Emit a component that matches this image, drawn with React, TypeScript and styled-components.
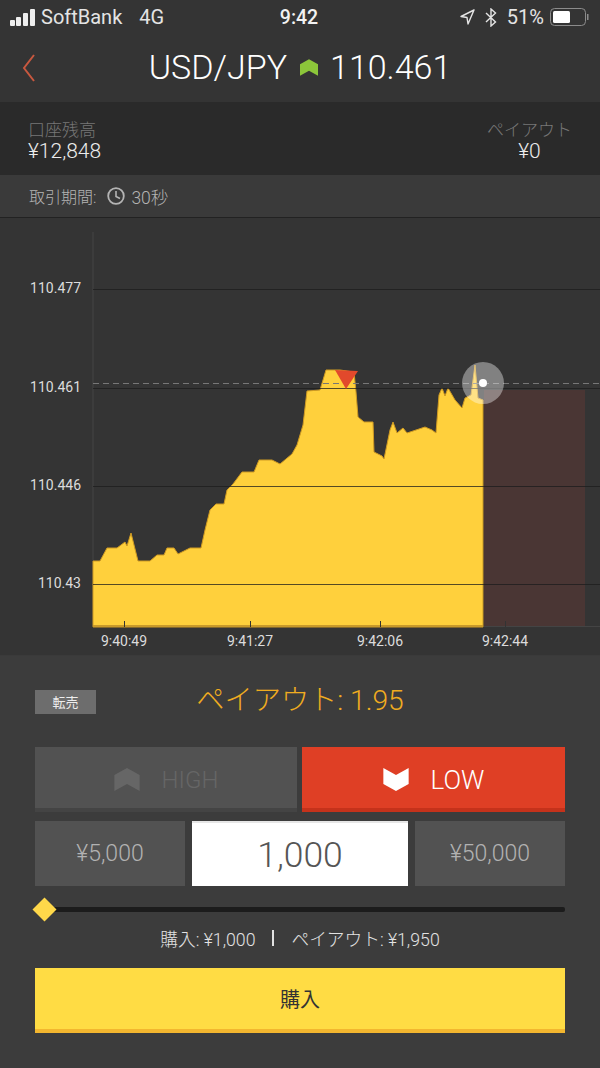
import styled, { createGlobalStyle } from "styled-components";

const GlobalStyle = createGlobalStyle`
  html, body {
    margin: 0;
    padding: 0;
    background: #3c3c3c;
  }
  * { box-sizing: border-box; }
`

const Page = styled.div`
  width: 600px;
  height: 1068px;
  display: flex;
  flex-direction: column;
  overflow: hidden;
  background: #3c3c3c;
  font-family: Roboto, "Noto Sans CJK JP", sans-serif;
  color: #fff;
`

const StatusBar = styled.div`
  height: 34px;
  padding: 0 10px 0 9px;
  display: grid;
  grid-template-columns: 1fr auto 1fr;
  align-items: center;
  background: #343434;
  font-size: 20px;
  color: #e4e4e4;
`

const StatusLeft = styled.div`
  display: flex;
  align-items: center;
`

const Carrier = styled.span`
  margin-left: 5px;
  font-weight: 400;
`

const Network = styled.span`
  margin-left: 17px;
`

const Clock = styled.span`
  font-weight: 500;
  font-size: 19.5px;
  color: #f2f2f2;
  margin-right: 1px;
`

const StatusRight = styled.div`
  display: flex;
  align-items: center;
  justify-content: flex-end;
`

const Percent = styled.span`
  margin: 0 6px 0 10px;
`

const Header = styled.div`
  height: 68px;
  position: relative;
  display: flex;
  align-items: center;
  justify-content: center;
  padding-bottom: 3px;
  background: #343434;
  font-size: 34px;
  font-weight: 300;
`

const BackButton = styled.svg`
  position: absolute;
  left: 22px;
  top: 19px;
`

const Trend = styled.svg`
  margin: 2px 12px 0 13px;
`

const Balance = styled.div`
  height: 73px;
  padding: 18px 28px 0;
  display: flex;
  justify-content: space-between;
  background: #2a2a2a;
`

const BalanceCol = styled.div<{ $right?: boolean }>`
  display: flex;
  flex-direction: column;
  align-items: ${(props) => (props.$right ? "center" : "flex-start")};
`

const BalanceLabel = styled.span`
  font-size: 17px;
  line-height: 20px;
  font-weight: 300;
  color: #777;
`

const BalanceValue = styled.span`
  font-size: 21px;
  line-height: 22px;
  font-weight: 300;
  color: #ececec;
`

const Period = styled.div`
  height: 43px;
  padding: 0 29px;
  display: flex;
  align-items: center;
  gap: 11px;
  background: #3a3a3a;
  border-bottom: 1px solid #222;
  font-size: 16px;
  font-weight: 300;
  color: #b4b4b4;
`

const PeriodValue = styled.span`
  display: flex;
  align-items: center;
  gap: 6px;
  font-size: 17.5px;
`

const ChartBox = styled.svg`
  display: block;
  flex: none;
  background: #343434;
`

const AxisLabel = styled.text`
  font-family: Roboto, sans-serif;
  font-size: 14px;
  fill: #dcdcdc;
`

const Panel = styled.div`
  flex: 1;
  padding: 0 35px;
  display: flex;
  flex-direction: column;
  background: #3c3c3c;
  border-top: 1px solid #3a3a3a;
`

const PayoutRow = styled.div`
  position: relative;
  height: 91px;
  padding-top: 26px;
  text-align: center;
  font-size: 28.2px;
  line-height: 38px;
  font-weight: 300;
  color: #f0ac20;
`

const ResellBadge = styled.span`
  position: absolute;
  left: 0;
  top: 34px;
  width: 61px;
  height: 24px;
  display: flex;
  align-items: center;
  justify-content: center;
  background: #6d6d6d;
  font-size: 13px;
  font-weight: 400;
  line-height: 1;
  color: #eee;
`

const Sides = styled.div`
  display: grid;
  grid-template-columns: 262px 263px;
  justify-content: space-between;
  height: 65px;
`

const SideButton = styled.div<{ $active?: boolean }>`
  display: flex;
  align-items: center;
  justify-content: center;
  gap: 22px;
  padding-top: 4px;
  font-size: ${(props) => (props.$active ? "26px" : "24px")};
  font-weight: 300;
  background: ${(props) => (props.$active ? "#df3f25" : "#525252")};
  border-bottom: 4px solid ${(props) => (props.$active ? "#c5321b" : "#444")};
  color: ${(props) => (props.$active ? "#fff" : "#666")};
`

const Amounts = styled.div`
  margin-top: 9px;
  height: 65px;
  display: grid;
  grid-template-columns: 150px 216px 150px;
  justify-content: space-between;
`

const Preset = styled.div`
  display: flex;
  align-items: center;
  justify-content: center;
  background: #525252;
  font-size: 23px;
  font-weight: 300;
  color: #b2b2b2;
`

const AmountInput = styled.div`
  display: flex;
  align-items: center;
  justify-content: center;
  background: #fff;
  border-top: 2px solid #e6e6e6;
  font-size: 35.5px;
  font-weight: 300;
  color: #555;
`

const Slider = styled.div`
  position: relative;
  margin-top: 21px;
  height: 5px;
  border-radius: 2px;
  background: #1c1c1c;
`

const SliderThumb = styled.span`
  position: absolute;
  left: 1px;
  top: -6px;
  width: 17px;
  height: 17px;
  transform: rotate(45deg);
  background: #ffd84a;
`

const Summary = styled.div`
  margin-top: 15px;
  height: 22px;
  display: flex;
  align-items: center;
  justify-content: center;
  gap: 17px;
  font-size: 17.7px;
  font-weight: 300;
  color: #e2e2e2;
`

const Separator = styled.span`
  width: 2px;
  height: 16px;
  background: #e2e2e2;
`

const BuyButton = styled.div`
  margin-top: 19px;
  height: 65px;
  display: flex;
  align-items: center;
  justify-content: center;
  background: #ffdc44;
  border-bottom: 4px solid #f3b62f;
  font-size: 20px;
  font-weight: 400;
  color: #333;
`

// chart coordinates are page coordinates minus the chart top (218)
const TOP = 218

const PRICE_POINTS: [number, number][] = [
  [93, 561], [100, 561], [107, 548], [117, 548], [125, 542], [127, 546], [131, 533], [138, 561],
  [150, 561], [157, 555], [164, 555], [167, 548], [174, 548], [178, 554], [190, 548], [201, 548],
  [205, 530], [210, 510], [216, 504], [224, 504], [227, 490], [233, 484], [242, 472], [254, 472],
  [259, 460], [272, 460], [280, 464], [292, 454], [297, 445], [303, 425], [307, 391], [320, 390],
  [326, 370], [340, 370], [354, 372], [356, 392], [358, 417], [364, 422], [373, 422], [374, 452],
  [382, 456], [384, 459], [390, 430], [393, 422], [397, 433], [403, 428], [407, 433], [425, 427],
  [432, 430], [436, 433], [439, 395], [442, 388], [445, 396], [448, 388], [455, 400], [462, 408],
  [465, 398], [471, 395], [475, 365], [478, 398], [483, 400],
]

const GRID_LINES = [
  { y: 289, label: "110.477", x: 81 },
  { y: 388, label: "110.461", x: 81 },
  { y: 486, label: "110.446", x: 81 },
  { y: 584, label: "110.43", x: 81 },
]

const TIME_TICKS = [
  { x: 124, label: "9:40:49" },
  { x: 250, label: "9:41:27" },
  { x: 380, label: "9:42:06" },
  { x: 505, label: "9:42:44" },
]

const Chevron = ({ down, color, w, h }: { down?: boolean; color: string; w: number; h: number }) => (
  <svg width={w} height={h} viewBox="0 0 22 20">
    <polygon
      points={down ? "0,0 11,6 22,0 22,14 11,20 0,14" : "0,6 11,0 22,6 22,20 11,14 0,20"}
      fill={color}
    />
  </svg>
)

const PriceChart = () => {
  const area = PRICE_POINTS.map(([x, y]) => `${x},${y - TOP}`).join(" ")
  return (
    <ChartBox width={600} height={437} viewBox="0 0 600 437">
      <rect x={484} y={390 - TOP} width={101} height={236} fill="#4a3634" />
      <line x1={93} x2={93} y1={232 - TOP} y2={626 - TOP} stroke="#444" />
      <polygon points={`93,${627 - TOP} ${area} 483,${627 - TOP}`} fill="#ffd03c" stroke="#cf9a22" strokeWidth={1} />
      <rect x={93} y={625 - TOP} width={390} height={2} fill="#c99a2a" />
      <line x1={484} x2={600} y1={626.5 - TOP} y2={626.5 - TOP} stroke="#444" />
      {GRID_LINES.map((g) => (
        <g key={g.y}>
          <line x1={93} x2={600} y1={g.y + 0.5 - TOP} y2={g.y + 0.5 - TOP} stroke="#1c1c1c" strokeOpacity={0.75} />
          <AxisLabel x={g.x} y={g.y + 4 - TOP} textAnchor="end">{g.label}</AxisLabel>
        </g>
      ))}
      <line x1={93} x2={600} y1={383.5 - TOP} y2={383.5 - TOP} stroke="#777" strokeDasharray="6 4" />
      {TIME_TICKS.map((t) => (
        <g key={t.x}>
          <line x1={t.x + 0.5} x2={t.x + 0.5} y1={621 - TOP} y2={627 - TOP} stroke="#333" />
          <AxisLabel x={t.x} y={646 - TOP} textAnchor="middle">{t.label}</AxisLabel>
        </g>
      ))}
      <polygon points={`335,${370 - TOP} 358,${371 - TOP} 346,${389 - TOP}`} fill="#e2492c" />
      <circle cx={483} cy={383 - TOP} r={21} fill="#fff" fillOpacity={0.38} />
      <circle cx={483} cy={383 - TOP} r={4} fill="#fff" />
    </ChartBox>
  )
}

const App = () => {
  return (
    <Page>
      <GlobalStyle />
      <StatusBar>
        <StatusLeft>
          <svg width={27} height={17} viewBox="0 0 27 17">
            <rect x={1} y={11} width={5} height={6} rx={1} fill="#eee" />
            <rect x={7} y={8} width={5} height={9} rx={1} fill="#eee" />
            <rect x={14} y={4} width={5} height={13} rx={1} fill="#eee" />
            <rect x={21} y={0} width={5} height={17} rx={1} fill="#eee" />
          </svg>
          <Carrier>SoftBank</Carrier>
          <Network>4G</Network>
        </StatusLeft>
        <Clock>9:42</Clock>
        <StatusRight>
          <svg width={15} height={16} viewBox="0 0 15 16">
            <path d="M14 1 L1 7.5 L7 8.5 L8 15 Z" fill="none" stroke="#e4e4e4" strokeWidth={1.4} strokeLinejoin="round" />
          </svg>
          <svg width={12} height={19} viewBox="0 0 12 19" style={{ marginLeft: 10 }}>
            <path d="M1 5 L10.5 14 L6 18 V1 L10.5 5 L1 14" fill="none" stroke="#e4e4e4" strokeWidth={1.4} />
          </svg>
          <Percent>51%</Percent>
          <svg width={40} height={18} viewBox="0 0 40 18">
            <rect x={0.5} y={0.5} width={35} height={17} rx={4} fill="none" stroke="#8c8c8c" />
            <rect x={3} y={3} width={17} height={12} rx={1.5} fill="#fff" />
            <rect x={37} y={6} width={1.5} height={6} fill="#8c8c8c" />
          </svg>
        </StatusRight>
      </StatusBar>
      <Header>
        <BackButton width={15} height={30} viewBox="0 0 15 30">
          <path d="M12 2 L2 15 L12 28" fill="none" stroke="#c8583f" strokeWidth={2} />
        </BackButton>
        USD/JPY
        <Trend width={18} height={17} viewBox="0 0 22 20">
          <polygon points="0,6 11,0 22,6 22,20 11,14 0,20" fill="#8cc63a" />
        </Trend>
        110.461
      </Header>
      <Balance>
        <BalanceCol>
          <BalanceLabel>口座残高</BalanceLabel>
          <BalanceValue>¥12,848</BalanceValue>
        </BalanceCol>
        <BalanceCol $right>
          <BalanceLabel>ペイアウト</BalanceLabel>
          <BalanceValue>¥0</BalanceValue>
        </BalanceCol>
      </Balance>
      <Period>
        取引期間:
        <PeriodValue>
          <svg width={18} height={18} viewBox="0 0 18 18">
            <circle cx={9} cy={9} r={7.8} fill="none" stroke="#b4b4b4" strokeWidth={1.8} />
            <path d="M9 4 V9.5 L13 11.5" fill="none" stroke="#b4b4b4" strokeWidth={1.6} />
          </svg>
          30秒
        </PeriodValue>
      </Period>
      <PriceChart />
      <Panel>
        <PayoutRow>
          <ResellBadge>転売</ResellBadge>
          ペイアウト: 1.95
        </PayoutRow>
        <Sides>
          <SideButton>
            <Chevron color="#666" w={26} h={23} />
            HIGH
          </SideButton>
          <SideButton $active>
            <Chevron down color="#fff" w={26} h={23} />
            LOW
          </SideButton>
        </Sides>
        <Amounts>
          <Preset>¥5,000</Preset>
          <AmountInput>1,000</AmountInput>
          <Preset>¥50,000</Preset>
        </Amounts>
        <Slider>
          <SliderThumb />
        </Slider>
        <Summary>
          <span>購入: ¥1,000</span>
          <Separator />
          <span>ペイアウト: ¥1,950</span>
        </Summary>
        <BuyButton>購入</BuyButton>
      </Panel>
    </Page>
  )
}

export default App
